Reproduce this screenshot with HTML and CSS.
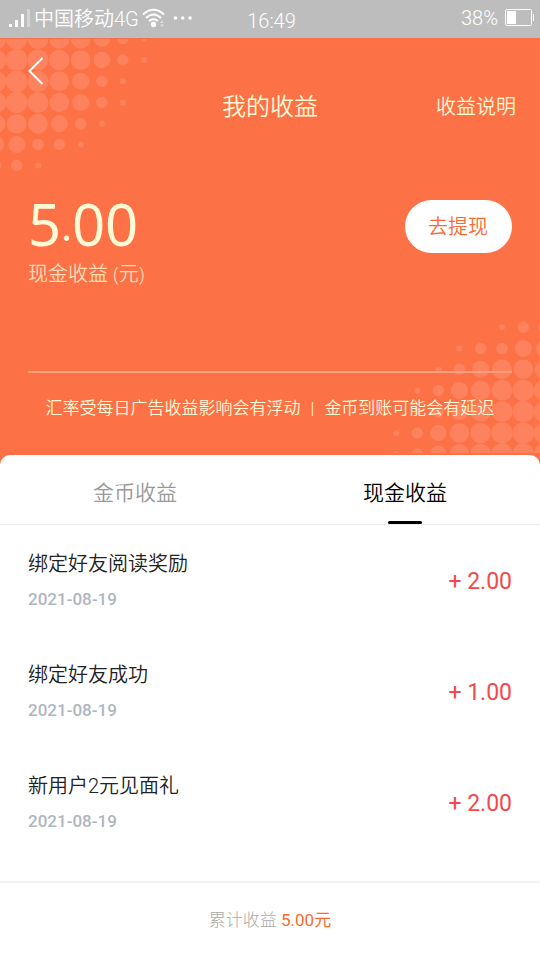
FILE: index.html
```html
<!DOCTYPE html>
<html lang="zh-CN">
<head>
<meta charset="utf-8">
<meta name="viewport" content="width=device-width, initial-scale=1">
<title>我的收益</title>
<link rel="stylesheet" href="styles.css">
</head>
<body>
<div class="status">
  <div class="status-left">
    <svg width="22" height="18" viewBox="0 0 22 18" fill="#fff" aria-hidden="true"><path d="M0 15h3v3H0zM6 11h3v7H6zM12 5h3v13h-3z"/><path d="M18 0h3v18h-3z" opacity=".35"/></svg>
    <span class="carrier">中国移动4G</span>
    <svg class="wifi" width="24" height="20" viewBox="0 0 24 20" fill="none" stroke="#fff" stroke-width="2" aria-hidden="true"><path d="M1 6.500Q11.500 -3 22 6.500M4 10Q11.500 3 19 10M7 13Q11.500 9.500 16 13"/><circle cx="11.500" cy="16.500" r="2.700" fill="#fff" stroke="none"/><path d="M18 15l2-2.500 2 2.500zM18 16.500l2 2.500 2-2.500z" fill="#fff" stroke="none" opacity=".5"/></svg>
    <svg width="20" height="4" viewBox="0 0 20 4" fill="#fff" aria-hidden="true"><circle cx="2.500" cy="2" r="1.800"/><circle cx="9.700" cy="2" r="1.800"/><circle cx="17" cy="2" r="1.800"/></svg>
  </div>
  <time class="clock">16:49</time>
  <div class="status-right">
    <span>38%</span>
    <svg width="29" height="18" viewBox="0 0 29 18" aria-hidden="true"><rect x=".5" y=".5" width="26" height="16" rx="1" fill="none" stroke="#fff"/><path d="M2 2h9v13H2zM28 5h1v7h-1z" fill="#fff"/></svg>
  </div>
</div>

<header class="hero">
  <svg class="dots dots-top" width="160" height="140" viewBox="0 39 160 140" fill="#fff" aria-hidden="true">
    <g><circle cx="-4.500" cy="38.700" r="10.800"/><circle cx="16.700" cy="38.700" r="10.800"/><circle cx="38" cy="38.700" r="10.500"/><circle cx="59.300" cy="38.700" r="10"/><circle cx="80.700" cy="38.700" r="9.800"/><circle cx="101.800" cy="38.700" r="8.300"/><circle cx="122.800" cy="38.700" r="5.700"/><circle cx="144" cy="38.700" r="3"/></g>
    <g><circle cx="-4.500" cy="60" r="10.800"/><circle cx="16.700" cy="60" r="10.800"/><circle cx="38" cy="60" r="10.500"/><circle cx="59.300" cy="60" r="10.300"/><circle cx="80.700" cy="60" r="9.800"/><circle cx="101.800" cy="60" r="8.300"/><circle cx="122.800" cy="60" r="5.700"/><circle cx="144" cy="60" r="3"/></g>
    <g><circle cx="-4.500" cy="81.300" r="10.800"/><circle cx="16.700" cy="81.300" r="10.800"/><circle cx="38" cy="81.300" r="10.500"/><circle cx="59.300" cy="81.300" r="9.800"/><circle cx="80.700" cy="81.300" r="8.500"/><circle cx="101.800" cy="81.300" r="5.700"/><circle cx="122.800" cy="81.300" r="3"/></g>
    <g><circle cx="-4.500" cy="102.400" r="10.800"/><circle cx="16.700" cy="102.400" r="10.800"/><circle cx="38" cy="102.400" r="10.500"/><circle cx="59.300" cy="102.400" r="9.800"/><circle cx="80.700" cy="102.400" r="8.500"/><circle cx="101.800" cy="102.400" r="5.700"/><circle cx="122.800" cy="102.400" r="3"/></g>
    <g><circle cx="-4.500" cy="123.700" r="9.800"/><circle cx="16.700" cy="123.700" r="9.800"/><circle cx="38" cy="123.700" r="10"/><circle cx="59.300" cy="123.700" r="8.500"/><circle cx="80.700" cy="123.700" r="5.700"/><circle cx="101.800" cy="123.700" r="3"/></g>
    <g><circle cx="-4.500" cy="144.400" r="8.500"/><circle cx="16.700" cy="144.400" r="8.500"/><circle cx="38" cy="144.400" r="5.700"/><circle cx="59.300" cy="144.400" r="5.700"/><circle cx="80.700" cy="144.400" r="3"/></g>
    <g><circle cx="-4.500" cy="165.400" r="5.700"/><circle cx="16.700" cy="165.400" r="5.700"/><circle cx="38" cy="165.400" r="3"/></g>
  </svg>
  <svg class="dots dots-bottom" width="160" height="143" viewBox="380 310 160 143" fill="#fff" aria-hidden="true">
    <g><circle cx="502" cy="327.300" r="3"/><circle cx="523.300" cy="327.300" r="5.700"/><circle cx="544.500" cy="327.300" r="5.700"/></g>
    <g><circle cx="459.400" cy="348.500" r="3"/><circle cx="480.700" cy="348.500" r="5.700"/><circle cx="502" cy="348.500" r="5.700"/><circle cx="523.300" cy="348.500" r="8.500"/><circle cx="544.500" cy="348.500" r="8.500"/></g>
    <g><circle cx="438.300" cy="369.300" r="3"/><circle cx="459.400" cy="369.300" r="5.700"/><circle cx="480.700" cy="369.300" r="8.500"/><circle cx="502" cy="369.300" r="10"/><circle cx="523.300" cy="369.300" r="9.800"/><circle cx="544.500" cy="369.300" r="9.800"/></g>
    <g><circle cx="417.300" cy="390.400" r="3"/><circle cx="438.300" cy="390.400" r="5.700"/><circle cx="459.400" cy="390.400" r="8.500"/><circle cx="480.700" cy="390.400" r="9.800"/><circle cx="502" cy="390.400" r="10.300"/><circle cx="523.300" cy="390.400" r="10.700"/><circle cx="544.500" cy="390.400" r="10.700"/></g>
    <g><circle cx="417.300" cy="411.700" r="3"/><circle cx="438.300" cy="411.700" r="5.700"/><circle cx="459.400" cy="411.700" r="8.500"/><circle cx="480.700" cy="411.700" r="9.800"/><circle cx="502" cy="411.700" r="10.500"/><circle cx="523.300" cy="411.700" r="10.800"/><circle cx="544.500" cy="411.700" r="10.800"/></g>
    <g><circle cx="396.300" cy="433" r="3"/><circle cx="417.300" cy="433" r="5.700"/><circle cx="438.300" cy="433" r="8.300"/><circle cx="459.400" cy="433" r="9.800"/><circle cx="480.700" cy="433" r="10.300"/><circle cx="502" cy="433" r="10.700"/><circle cx="523.300" cy="433" r="10.800"/><circle cx="544.500" cy="433" r="10.800"/></g>
    <g><circle cx="396.300" cy="454" r="3"/><circle cx="417.300" cy="454" r="5.700"/><circle cx="438.300" cy="454" r="8.300"/><circle cx="459.400" cy="454" r="9.800"/><circle cx="480.700" cy="454" r="10.300"/><circle cx="502" cy="454" r="10.700"/><circle cx="523.300" cy="454" r="10.800"/><circle cx="544.500" cy="454" r="10.800"/></g>
  </svg>
  <button class="back" type="button" aria-label="返回"><svg width="16" height="28" viewBox="0 0 16 28" fill="none" stroke="#fff" stroke-width="2" aria-hidden="true"><path d="M14.500 1L1.500 14l13 13"/></svg></button>
  <div class="title-row">
    <h1 class="title">我的收益</h1>
    <a class="explain" href="#">收益说明</a>
  </div>
  <div class="balance-row">
    <div>
      <p class="amount">5<span class="point">.</span>00</p>
      <p class="amount-label">现金收益 (元)</p>
    </div>
    <button class="withdraw" type="button">去提现</button>
  </div>
  <p class="notice"><span>汇率受每日广告收益影响会有浮动</span><span>|</span><span>金币到账可能会有延迟</span></p>
</header>

<main class="sheet">
  <nav class="tabs">
    <a class="tab" href="#">金币收益</a>
    <a class="tab active" href="#" aria-current="page">现金收益</a>
  </nav>
  <ul class="list">
    <li class="item"><div><p class="name">绑定好友阅读奖励</p><time class="date">2021-08-19</time></div><span class="value">+ 2.00</span></li>
    <li class="item"><div><p class="name">绑定好友成功</p><time class="date">2021-08-19</time></div><span class="value">+ 1.00</span></li>
    <li class="item"><div><p class="name">新用户2元见面礼</p><time class="date">2021-08-19</time></div><span class="value">+ 2.00</span></li>
  </ul>
</main>
<footer class="total">累计收益 <span class="total-value">5.00元</span></footer>
</body>
</html>
```
FILE: styles.css
```css
* { box-sizing: border-box; }

body {
  margin: 0;
  min-height: 100vh;
  display: flex;
  flex-direction: column;
  background: #fff;
  font-family: Roboto, "Noto Sans CJK SC", sans-serif;
  font-weight: 350;
}

h1, p, ul { margin: 0; padding: 0; font-weight: inherit; }
ul { list-style: none; }
a { color: inherit; text-decoration: none; }
button { border: 0; padding: 0; font: inherit; cursor: pointer; }
svg { display: block; flex: none; }

.status {
  display: grid;
  grid-template-columns: 1fr auto 1fr;
  align-items: center;
  height: 38px;
  padding: 0 6px 2px 9px;
  background: #bdbdbd;
  color: #fff;
  font-size: 20px;
  line-height: 24px;
}
.status-left, .status-right { display: flex; align-items: center; }
.status-left { gap: 3px; }
.status-right { justify-content: flex-end; gap: 7px; }
.carrier { padding-top: 2px; }
.wifi { margin-right: 4px; }
.clock { padding-top: 5px; }

.hero {
  position: relative;
  padding: 19px 28px 44px;
  background: #fd7146;
  color: #fff9d6;
}
.hero > * { position: relative; }
.hero > .dots { position: absolute; opacity: 0.12; }
.dots-top { top: 1px; left: 0; }
.dots-bottom { bottom: 12px; right: 0; }

.back { display: block; background: none; }

.title-row {
  display: grid;
  grid-template-columns: 1fr auto 1fr;
  align-items: center;
  margin-top: 4px;
  height: 36px;
}
.title { grid-column: 2; font-size: 24px; line-height: 36px; }
.explain { justify-self: end; margin-right: -4px; font-size: 20px; line-height: 30px; }

.balance-row {
  display: flex;
  justify-content: space-between;
  align-items: flex-start;
  margin-top: 69px;
}
.amount {
  height: 65px;
  font-family: "Noto Sans", "Noto Sans CJK SC", sans-serif;
  font-size: 58px;
  line-height: 60px;
  font-weight: 400;
}
.point { font-size: 40px; line-height: 40px; vertical-align: 5px; }
.amount-label {
  font-family: "Noto Sans", "Noto Sans CJK SC", sans-serif;
  font-size: 20px;
  line-height: 30px;
  color: #fedcb8;
}
.withdraw {
  margin-top: 6px;
  padding: 0 24px 2px 23px;
  height: 53px;
  border-radius: 27px;
  background: #fff;
  color: #fa6a2f;
  font-size: 20px;
}

.notice {
  display: flex;
  justify-content: center;
  gap: 10px;
  margin-top: 82px;
  padding-top: 22px;
  border-top: 2px solid #ffa07a;
  font-size: 17px;
  line-height: 26px;
}

.sheet {
  position: relative;
  flex: 1;
  margin-top: -10px;
  border-radius: 10px 10px 0 0;
  background: #fff;
}
.tabs { display: flex; border-bottom: 1px solid #eee; }
.tab {
  flex: 1;
  display: flex;
  flex-direction: column;
  align-items: center;
  justify-content: space-between;
  height: 69px;
  padding-top: 22px;
  color: #999;
  font-size: 21px;
  line-height: 32px;
}
.tab.active { color: #000; }
.tab.active::after {
  content: "";
  width: 34px;
  height: 3px;
  border-radius: 2px;
  background: #000;
}

.list { padding: 0 28px; }
.item {
  display: flex;
  align-items: center;
  justify-content: space-between;
  height: 111px;
}
.name { color: #222; font-size: 20px; line-height: 30px; }
.date { display: block; margin: 7px 0 1px; color: #afb6c0; font-size: 17px; line-height: 26px; font-weight: 500; }
.value { padding-top: 2px; color: #f5484d; font-size: 23px; line-height: 30px; font-weight: 400; }

.total {
  height: 79px;
  padding-top: 24px;
  border-top: 2px solid #f3f3f3;
  text-align: center;
  color: #aaa;
  font-size: 17px;
  line-height: 26px;
  font-weight: 300;
}
.total-value { color: #fa6a2f; font-weight: 400; }
```
